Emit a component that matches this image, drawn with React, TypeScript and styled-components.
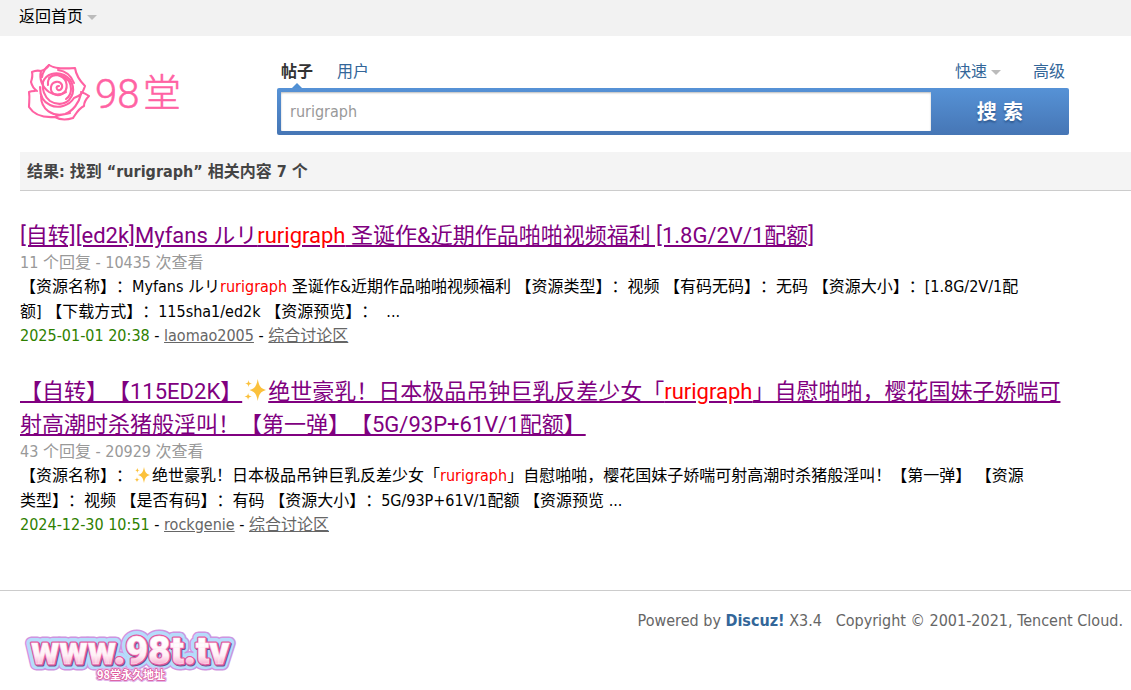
import React from "react";
import styled, { createGlobalStyle } from "styled-components";

const GlobalStyle = createGlobalStyle`
  * { box-sizing: border-box; }
  body {
    margin: 0;
    background: #fff;
    color: #000;
    font: 16px/24px "DejaVu Sans Condensed", "Noto Sans CJK SC", sans-serif;
    text-spacing-trim: space-all;
  }
  a { color: inherit; }
`;

const TopBar = styled.nav`
  display: flex;
  align-items: center;
  height: 36px;
  padding: 0 19px 2px;
  background: #f2f2f2;
`;

const ArrowLink = styled.a`
  display: inline-flex;
  align-items: center;
  gap: 4px;
  text-decoration: none;
  &::after {
    content: "";
    border: 5px solid transparent;
    border-top-color: #bbb;
    border-bottom: 0;
  }
`;

const Header = styled.header`
  display: flex;
  height: 116px;
  padding: 24px 62px 0 20px;
`;

const LogoLink = styled.a`
  flex: 0 0 257px;
`;

const SearchForm = styled.form`
  flex: 1;
  max-width: 792px;
`;

const Tabs = styled.div`
  display: flex;
  justify-content: space-between;
  height: 28px;
  padding: 0 4px;
  color: #369;
`;

const TabGroup = styled.div<{ $gap: number; $top?: boolean }>`
  display: flex;
  align-items: ${(p) => (p.$top ? "flex-start" : "stretch")};
  gap: ${(p) => p.$gap}px;
`;

const Tab = styled.a<{ $active?: boolean }>`
  position: relative;
  text-decoration: none;
  color: ${(p) => (p.$active ? "#333" : "#369")};
  font-weight: ${(p) => (p.$active ? 700 : 400)};
  &::after {
    content: "";
    display: ${(p) => (p.$active ? "block" : "none")};
    position: absolute;
    left: 11px;
    bottom: 0;
    border: 5px solid transparent;
    border-bottom-color: #5090d4;
    border-top: 0;
  }
`;

const SearchBox = styled.div`
  display: flex;
  height: 47px;
  padding: 4px 0 4px 4px;
  border-radius: 2px;
  background: linear-gradient(#5692d6, #4676b5);
`;

const SearchInput = styled.input`
  flex: 1;
  min-width: 0;
  padding: 0 9px;
  border: 0;
  border-radius: 1px;
  outline: 0;
  background: #fff;
  box-shadow: inset 0 1px 2px #bbb;
  color: #999;
  font: inherit;
`;

const SearchButton = styled.button`
  flex: 0 0 138px;
  border: 0;
  padding: 0;
  background: none;
  color: #fff;
  font: 700 20px/24px "DejaVu Sans Condensed", "Noto Sans CJK SC", sans-serif;
  text-shadow: 0 2px 2px #2f5a92;
`;

const ResultHeading = styled.h1`
  margin: 0 0 0 20px;
  padding: 8px 7px 6px;
  border-bottom: 1px solid #ccc;
  background: #f4f4f4;
  color: #444;
  font-size: 16px;
  line-height: 24px;
`;

const ResultList = styled.ul`
  display: flex;
  flex-direction: column;
  gap: 27px;
  max-width: 1070px;
  margin: 0;
  padding: 28px 0 53px 20px;
  list-style: none;
`;

const Title = styled.h2`
  margin: 0;
  color: #800080;
  font-family: Roboto, "Noto Sans CJK SC", sans-serif;
  font-size: 22px;
  font-weight: 400;
  line-height: 33px;
`;

const Hit = styled.span`
  color: #f00;
`;

const Stats = styled.p`
  margin: 0;
  color: #999;
  line-height: 22px;
`;

const Snippet = styled.p`
  max-width: 1010px;
  margin: 0;
  line-height: 25px;
`;

const Meta = styled.p`
  margin: 0;
  time { color: #2e8000; }
  a { color: #666; }
`;

const Footer = styled.footer`
  display: flex;
  justify-content: space-between;
  border-top: 1px solid #ccc;
  padding: 18px 8px 0 20px;
  color: #666;
  p { margin: 0; white-space: pre; }
  strong a { color: #369; text-decoration: none; }
`;

const SparkleIcon = styled.svg`
  width: 1em;
  height: 1em;
  margin: 0 2px;
  vertical-align: -2px;
`;

const Sparkles = () => (
  <SparkleIcon viewBox="0 0 24 24" fill="#fbc13c" role="img" aria-label="✨">
    <path d="M15 0c1.500 8 3 10 9 12-6 2-7.500 4-9 12-1.500-8-3-10-9-12 6-2 7.500-4 9-12z" />
    <path d="M5 1c.5 3 1 3.500 4 4-3 .5-3.500 1-4 4-.5-3-1-3.500-4-4 3-.5 3.500-1 4-4zM4.500 15c.4 3 1 3.500 4 4-3 .5-3.600 1-4 4-.4-3-1-3.500-4-4 3-.5 3.600-1 4-4z" />
  </SparkleIcon>
);

const RoseLogo = () => (
  <svg width="170" height="70" viewBox="20 60 170 70" role="img" aria-label="98堂" fill="none" stroke="#ff62a3" strokeWidth="2.1" strokeLinejoin="round" strokeLinecap="round">
    <path d="M41 71c3-1 6-2 8-6 6 4 14 4 26 3 1 7 4 12 10 18-1 3-2 6-4 8M41 71c-4-1-7 0-9 1 1 4 0 7-1 10 1 4 3 7 6 9" />
    <path d="M35 91c-2 0-4 0-6 1 1 6 0 10 0 15 5 8 13 11 26 10 5 3 12 3 18 1 3-4 5-9 11-12 0-4 2-7 5-10-3-2-5-3-8-4" />
    <path d="M41 71c-2 8 1 16 8 21 6 4 12 3 17 0M49 65c-4 3-6 7-7 12M43 82c3-8 13-11 21-7 10 5 12 17 5 25-5 5-13 5-19 1-6-5-8-12-7-19z" />
    <path d="M48 85c-1-7 5-12 12-9 8 3 9 14 2 18-6 3-12-1-11-7 1-6 9-7 11-2 1 4-3 7-5 4-1-2 0-3 2-3M49 78c8-7 22-1 22 11 0 5-2 8-5 10" />
    <path d="M40 87c0 9 3 15 10 18 8 4 19 1 24-7 3-1 5-2 7-4-2 9-8 17-16 20-12 3-24-4-24-18M55 117c4-3 9-2 15-4M58 70c8 1 13 5 16 13" />
    <g fill="#ff62a3" strokeWidth="0.5" fontFamily='"Noto Sans CJK SC", sans-serif' fontWeight="300">
      <text x="95" y="108" fontSize="40" fontFamily='Roboto, "Noto Sans CJK SC", sans-serif'>98</text>
      <text x="143" y="106" fontSize="38">堂</text>
    </g>
  </svg>
);

const SiteBadge = () => (
  <svg width="222" height="75" viewBox="20 609 222 75" role="img" aria-label="www.98t.tv 98堂永久地址">
    <defs>
      <linearGradient id="sheen" x1="0" y1="0" x2="0" y2="1">
        <stop offset="0.3" stopColor="#fff" />
        <stop offset="0.6" stopColor="#fff0f6" />
        <stop offset="0.8" stopColor="#f9a9cd" />
      </linearGradient>
      <text id="address" x="31" y="664" fontFamily="Roboto, sans-serif" fontWeight="900" fontSize="39">www.98t.tv</text>
      <text id="caption" x="97" y="679" fontFamily='"Noto Sans CJK SC", sans-serif' fontWeight="700" fontSize="11">98堂永久地址</text>
    </defs>
    <g strokeLinejoin="round">
      <use href="#address" fill="#cf94e0" stroke="#cf94e0" strokeWidth="13" />
      <use href="#address" fill="#b5dcfb" stroke="#b5dcfb" strokeWidth="10" />
      <use href="#address" x="1" y="1" fill="#67548f" stroke="#67548f" strokeWidth="3" />
      <use href="#address" fill="#e5589e" stroke="#e5589e" strokeWidth="3" />
      <use href="#address" fill="url(#sheen)" stroke="#fdeaf3" strokeWidth="0.5" />
      <use href="#caption" fill="#e2b3ea" stroke="#e2b3ea" strokeWidth="4" />
      <use href="#caption" fill="#dd5699" stroke="#dd5699" strokeWidth="1.5" />
      <use href="#caption" fill="#fff" />
    </g>
  </svg>
);

type ResultProps = {
  title: React.ReactNode;
  stats: string;
  snippet: React.ReactNode;
  date: string;
  author: string;
};

const Result = ({ title, stats, snippet, date, author }: ResultProps) => (
  <li>
    <Title><a href="#thread">{title}</a></Title>
    <Stats>{stats}</Stats>
    <Snippet>{snippet}</Snippet>
    <Meta>
      <time>{date}</time> - <a href="#author">{author}</a> - <a href="#forum">综合讨论区</a>
    </Meta>
  </li>
);

export default function App() {
  return (
    <>
      <GlobalStyle />
      <TopBar><ArrowLink href="#home">返回首页</ArrowLink></TopBar>
      <Header>
        <LogoLink href="#home"><RoseLogo /></LogoLink>
        <SearchForm onSubmit={(e) => e.preventDefault()}>
          <Tabs>
            <TabGroup $gap={24}>
              <Tab href="#posts" $active>帖子</Tab>
              <Tab href="#users">用户</Tab>
            </TabGroup>
            <TabGroup $gap={32} $top>
              <ArrowLink href="#quick">快速</ArrowLink>
              <Tab href="#advanced">高级</Tab>
            </TabGroup>
          </Tabs>
          <SearchBox>
            <SearchInput aria-label="搜索" defaultValue="rurigraph" />
            <SearchButton type="submit">搜 索</SearchButton>
          </SearchBox>
        </SearchForm>
      </Header>
      <main>
        <ResultHeading>结果: 找到 “rurigraph” 相关内容 7 个</ResultHeading>
        <ResultList>
          <Result
            title={<>[自转][ed2k]Myfans ルリ<Hit>rurigraph</Hit> 圣诞作&amp;近期作品啪啪视频福利 [1.8G/2V/1配额]</>}
            stats="11 个回复 - 10435 次查看"
            snippet={<>【资源名称】：Myfans ルリ<Hit>rurigraph</Hit> 圣诞作&amp;近期作品啪啪视频福利 【资源类型】：视频 【有码无码】：无码 【资源大小】：[1.8G/2V/1配额] 【下载方式】：115sha1/ed2k 【资源预览】： &nbsp;...</>}
            date="2025-01-01 20:38"
            author="laomao2005"
          />
          <Result
            title={<>【自转】【115ED2K】<Sparkles />绝世豪乳！日本极品吊钟巨乳反差少女「<Hit>rurigraph</Hit>」自慰啪啪，樱花国妹子娇喘可射高潮时杀猪般淫叫！【第一弹】【5G/93P+61V/1配额】</>}
            stats="43 个回复 - 20929 次查看"
            snippet={<>【资源名称】：<Sparkles />绝世豪乳！日本极品吊钟巨乳反差少女「<Hit>rurigraph</Hit>」自慰啪啪，樱花国妹子娇喘可射高潮时杀猪般淫叫！【第一弹】 【资源类型】：视频 【是否有码】：有码 【资源大小】：5G/93P+61V/1配额 【资源预览 ...</>}
            date="2024-12-30 10:51"
            author="rockgenie"
          />
        </ResultList>
      </main>
      <Footer>
        <SiteBadge />
        <p>Powered by <strong><a href="#discuz">Discuz!</a></strong> X3.4{"   "}Copyright © 2001-2021, Tencent Cloud.</p>
      </Footer>
    </>
  );
}
